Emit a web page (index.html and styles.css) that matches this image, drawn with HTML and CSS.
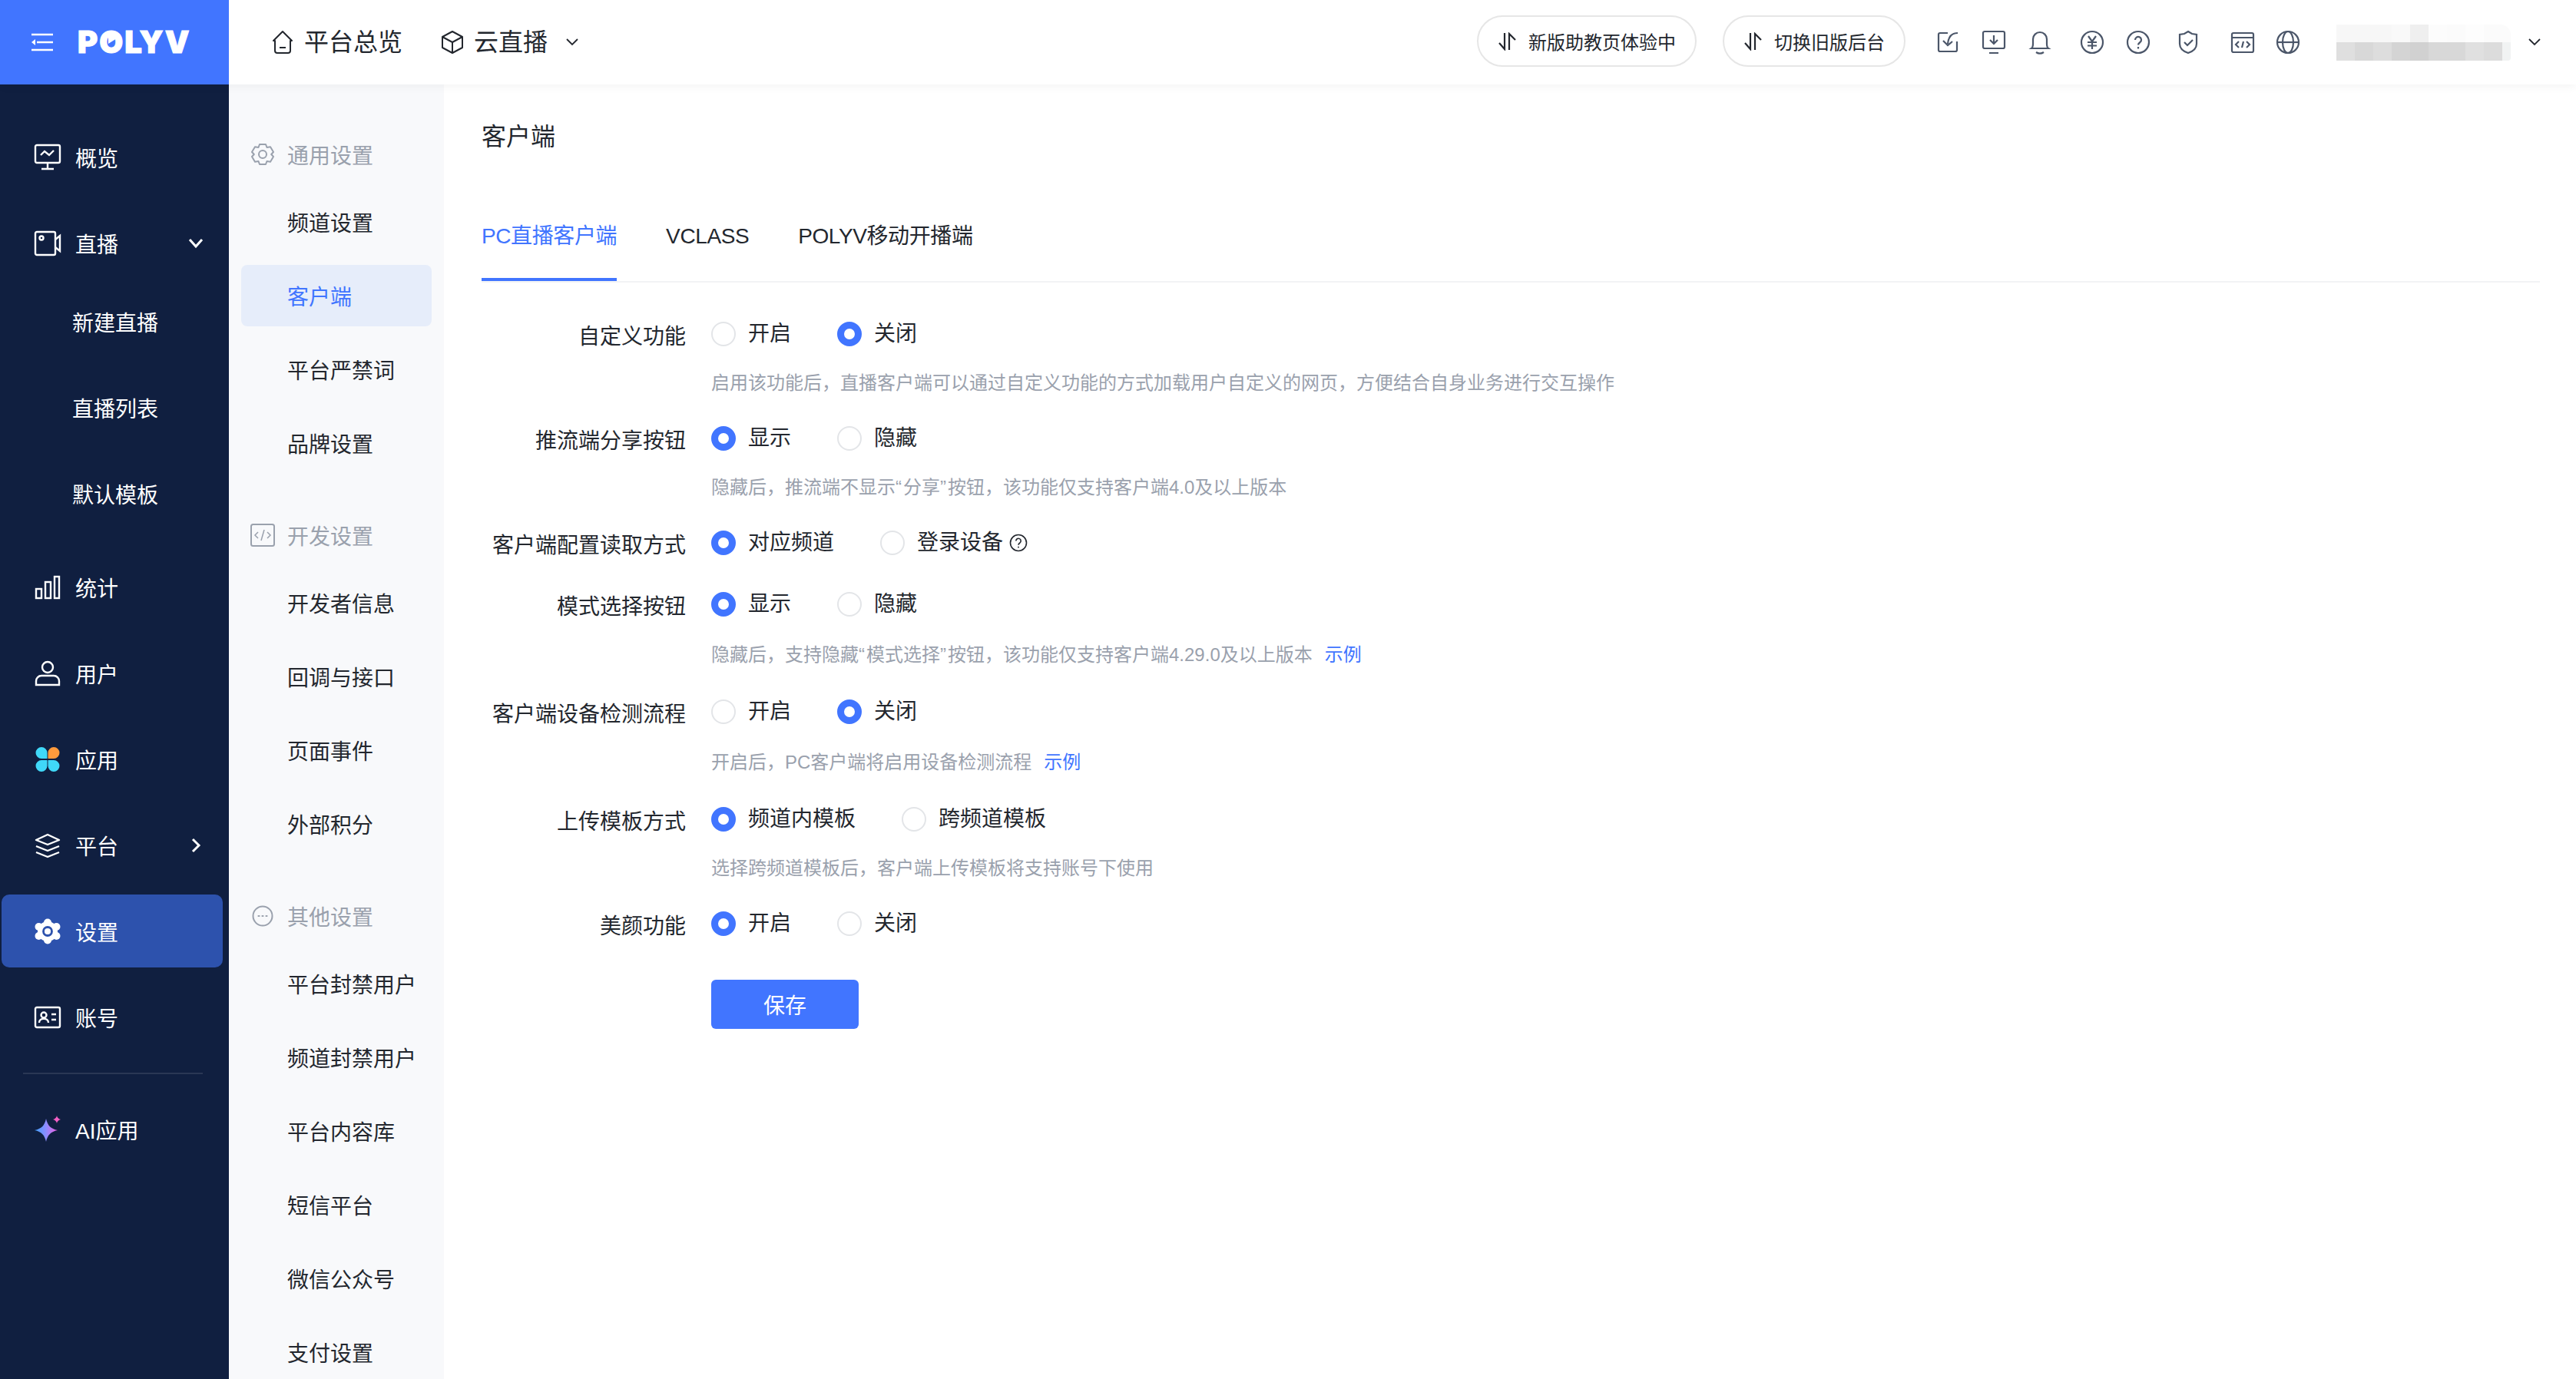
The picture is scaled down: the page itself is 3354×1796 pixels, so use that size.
FILE: index.html
```html
<!DOCTYPE html>
<html lang="zh-CN">
<head>
    <meta charset="UTF-8">
    <title>POLYV - 客户端</title>
    <link rel="stylesheet" href="styles.css">
</head>
<body>
    <!-- Top bar -->
    <header class="topbar">
        <div class="brand">
            <svg class="brand-toggle" viewBox="0 0 28 24" fill="none" stroke="#fff" stroke-width="2.4"><path d="M0 2h28M7 12h21M0 22h28"/><path d="M0 12l5-4v8z" fill="#fff" stroke="none"/></svg>
            <span class="brand-logo">P<span class="brand-o">O<i class="brand-play"></i></span>LYV</span>
        </div>
        <nav class="topnav">
            <a class="topnav-item">
                <svg class="topnav-icon" viewBox="0 0 32 32" fill="none" stroke="#23272e" stroke-width="2" stroke-linejoin="round"><path d="M16 2L4 14h2v13a3 3 0 0 0 3 3h14a3 3 0 0 0 3-3V14h2z"/><path d="M12 23h8"/></svg>
                平台总览
            </a>
            <a class="topnav-item topnav-item--product">
                <svg class="topnav-icon" viewBox="0 0 32 32" fill="none" stroke="#23272e" stroke-width="2" stroke-linejoin="round"><path d="M16 2l13 7v14l-13 7-13-7V9z"/><path d="M3 9l13 7 13-7M16 16v14"/></svg>
                云直播
                <svg class="topnav-chevron" viewBox="0 0 16 10" fill="none" stroke="#23272e" stroke-width="1.8"><path d="M1 1l7 7 7-7"/></svg>
            </a>
        </nav>
        <div class="topbar-right">
            <a class="pill">
                <svg class="pill-icon" viewBox="0 0 24 24" fill="none" stroke="#23272e" stroke-width="2.200"><path d="M9 1v21L2 14M15 23V2l8 8"/></svg>
                新版助教页体验中
            </a>
            <a class="pill">
                <svg class="pill-icon" viewBox="0 0 24 24" fill="none" stroke="#23272e" stroke-width="2.200"><path d="M9 1v21L2 14M15 23V2l8 8"/></svg>
                切换旧版后台
            </a>
            <div class="tools">
                <svg class="tool" viewBox="0 0 32 32"><path d="M16 4H6a2 2 0 0 0-2 2v20a2 2 0 0 0 2 2h20a2 2 0 0 0 2-2V15"/><path d="M29 4c-7 0-12 4-13 14M10 14l6 6 6-5"/></svg>
                <svg class="tool" viewBox="0 0 32 32"><rect x="2" y="2" width="28" height="22" rx="2"/><path d="M16 7v11M11 13l5 5 5-5M10 30h12"/></svg>
                <svg class="tool" viewBox="0 0 32 32"><path d="M5 24c1.500-1 2-3 2-6v-6a9 9 0 0 1 18 0v6c0 3 .5 5 2 6z"/><path d="M11 29c3 2 7 2 10 0"/></svg>
                <svg class="tool tool--gap-md" viewBox="0 0 32 32"><circle cx="16" cy="16" r="14"/><path d="M11 8l5 7 5-7M16 15v10M10 16h12M10 20.500h12"/></svg>
                <svg class="tool" viewBox="0 0 32 32"><circle cx="16" cy="16" r="14"/><path d="M12 13a4 4 0 1 1 6.500 3c-1.500 1-2.500 1.500-2.500 3.500M16 22v2.500"/></svg>
                <svg class="tool tool--gap-sm" viewBox="0 0 32 32"><path d="M16 2l5 3 6 1v12c0 6-5 10-11 12-6-2-11-6-11-12V6l6-1z"/><path d="M11 16l4 4 7-7"/></svg>
                <svg class="tool tool--gap-lg" viewBox="0 0 32 32"><rect x="2" y="4" width="28" height="25" rx="2"/><path d="M2 10h28M11 15l-4 4 4 4M21 15l4 4-4 4M17 15l-2 8"/></svg>
                <svg class="tool tool--tight" viewBox="0 0 32 32"><circle cx="16" cy="16" r="14"/><ellipse cx="16" cy="16" rx="7" ry="14"/><path d="M2 16h28"/></svg>
            </div>
            <div class="avatar"></div>
            <svg class="topnav-chevron" viewBox="0 0 16 10" fill="none" stroke="#23272e" stroke-width="1.8"><path d="M1 1l7 7 7-7"/></svg>
        </div>
    </header>

    <div class="layout">
        <!-- Dark sidebar -->
        <aside class="sidebar">
            <a class="side-item">
                <svg class="side-icon" viewBox="0 0 36 36" fill="none" stroke="#fff" stroke-width="2.400"><rect x="2" y="2" width="32" height="23" rx="2"/><path d="M9 15l5-5 6 5 6-6M18 25v8M10 33h16"/></svg>
                概览
            </a>
            <a class="side-item">
                <svg class="side-icon" viewBox="0 0 36 36" fill="none" stroke="#fff" stroke-width="2.400"><rect x="2" y="3" width="26" height="30" rx="2"/><circle cx="10" cy="11" r="2.500"/><path d="M28 13l6-5v20l-6-5"/></svg>
                直播
                <svg class="side-chevron" viewBox="0 0 20 14" fill="none" stroke="#fff" stroke-width="3"><path d="M2 2l8 9 8-9"/></svg>
            </a>
            <div class="side-sub">
                <a class="side-subitem">新建直播</a>
                <a class="side-subitem">直播列表</a>
                <a class="side-subitem">默认模板</a>
            </div>
            <a class="side-item">
                <svg class="side-icon" viewBox="0 0 36 36" fill="none" stroke="#fff" stroke-width="2.400"><rect x="3" y="20" width="7" height="12"/><rect x="15" y="11" width="7" height="21"/><rect x="27" y="4" width="6" height="28"/></svg>
                统计
            </a>
            <a class="side-item">
                <svg class="side-icon" viewBox="0 0 36 36" fill="none" stroke="#fff" stroke-width="2.400"><circle cx="18" cy="10" r="7"/><path d="M3 33v-5a7 7 0 0 1 7-7h16a7 7 0 0 1 7 7v5z"/></svg>
                用户
            </a>
            <a class="side-item">
                <svg class="side-icon" viewBox="0 0 36 36"><path d="M10 2a7.500 7.500 0 0 1 7.500 7.500v7a.5.5 0 0 1-.5.500h-7a7.500 7.500 0 0 1 0-15z" fill="#40d8f8"/><path d="M26 2a7.500 7.500 0 0 1 0 15h-7a.5.5 0 0 1-.5-.5v-7A7.500 7.500 0 0 1 26 2z" fill="#ff9a3c"/><path d="M10 34a7.500 7.500 0 0 1 0-15h7a.5.5 0 0 1 .5.500v7A7.500 7.500 0 0 1 10 34z" fill="#40d8f8"/><path d="M26 34a7.500 7.500 0 0 1-7.500-7.500v-7a.5.5 0 0 1 .5-.5h7a7.500 7.500 0 0 1 0 15z" fill="#40d8f8"/></svg>
                应用
            </a>
            <a class="side-item">
                <svg class="side-icon" viewBox="0 0 36 36" fill="none" stroke="#fff" stroke-width="2.400" stroke-linejoin="round"><path d="M18 4l15 7-15 6-15-6z"/><path d="M3 19l15 6 15-6M3 27l15 6 15-6"/></svg>
                平台
                <svg class="side-chevron side-chevron--right" viewBox="0 0 14 20" fill="none" stroke="#fff" stroke-width="3"><path d="M3 2l8 8-8 8"/></svg>
            </a>
            <a class="side-item side-item--active">
                <svg class="side-icon" viewBox="0 0 36 36"><g fill="#fff"><circle cx="18" cy="18" r="13"/><circle cx="18" cy="6.500" r="5"/><circle cx="18" cy="29.500" r="5"/><circle cx="6.500" cy="12" r="5"/><circle cx="29.500" cy="12" r="5"/><circle cx="6.500" cy="24" r="5"/><circle cx="29.500" cy="24" r="5"/></g><circle cx="18" cy="18" r="5.500" fill="#fff" stroke="#2d52ad" stroke-width="2.800"/></svg>
                设置
            </a>
            <a class="side-item">
                <svg class="side-icon" viewBox="0 0 36 36" fill="none" stroke="#fff" stroke-width="2.400"><rect x="2" y="5" width="32" height="26" rx="2"/><circle cx="13" cy="15" r="3.500"/><path d="M7 25c0-7 12-7 12 0M23 14h6M23 21h6"/></svg>
                账号
            </a>
            <div class="side-divider"></div>
            <a class="side-item">
                <svg class="side-icon" viewBox="0 0 36 36"><defs><linearGradient id="spark" x1="0" y1="0.500" x2="1" y2="0.500"><stop offset="0" stop-color="#3fa2ff"/><stop offset="0.500" stop-color="#8d8cff"/><stop offset="1" stop-color="#f05fe0"/></linearGradient></defs><path d="M16 4c2 9 6 13 15 15-9 2-13 6-15 15-2-9-6-13-15-15 9-2 13-6 15-15z" fill="url(#spark)"/><path d="M30 0c.5 2.500 2 4 5 5-3 1-4.500 2.500-5 5-.5-2.500-2-4-5-5 3-1 4.500-2.500 5-5z" fill="#f25fc4"/></svg>
                AI应用
            </a>
        </aside>

        <!-- Settings menu -->
        <aside class="submenu">
            <div class="submenu-group">
                <div class="submenu-title">
                    <svg class="submenu-icon" viewBox="0 0 32 32" fill="none" stroke="#9aa1ad" stroke-width="2" stroke-linejoin="round"><path d="M12 3h8l1.500 4 4.500-.8 4 6.800-2.800 3 2.800 3-4 6.800-4.500-.8L20 29h-8l-1.500-4-4.500.8-4-6.800 2.800-3-2.800-3 4-6.800 4.500.8z"/><circle cx="16" cy="16" r="5"/></svg>
                    通用设置
                </div>
                <a class="submenu-item">频道设置</a>
                <a class="submenu-item submenu-item--active">客户端</a>
                <a class="submenu-item">平台严禁词</a>
                <a class="submenu-item">品牌设置</a>
            </div>
            <div class="submenu-group">
                <div class="submenu-title">
                    <svg class="submenu-icon" viewBox="0 0 32 32" fill="none" stroke="#9aa1ad" stroke-width="2"><rect x="1" y="2" width="30" height="28" rx="2.500"/><path d="M10 12l-4 4 4 4M22 12l4 4-4 4M18 9l-4 14" stroke-width="1.500"/></svg>
                    开发设置
                </div>
                <a class="submenu-item">开发者信息</a>
                <a class="submenu-item">回调与接口</a>
                <a class="submenu-item">页面事件</a>
                <a class="submenu-item">外部积分</a>
            </div>
            <div class="submenu-group">
                <div class="submenu-title">
                    <svg class="submenu-icon" viewBox="0 0 32 32" fill="none" stroke="#9aa1ad" stroke-width="2"><circle cx="16" cy="16" r="12.500"/><path d="M10.500 16h1M15.500 16h1M20.500 16h1" stroke-width="2.200" stroke-linecap="round"/></svg>
                    其他设置
                </div>
                <a class="submenu-item">平台封禁用户</a>
                <a class="submenu-item">频道封禁用户</a>
                <a class="submenu-item">平台内容库</a>
                <a class="submenu-item">短信平台</a>
                <a class="submenu-item">微信公众号</a>
                <a class="submenu-item">支付设置</a>
            </div>
        </aside>

        <!-- Page content -->
        <main class="content">
            <h1 class="page-title">客户端</h1>
            <div class="tabs">
                <a class="tab tab--active">PC直播客户端</a>
                <a class="tab">VCLASS</a>
                <a class="tab">POLYV移动开播端</a>
            </div>

            <form class="form">
                <div class="form-row">
                    <label class="form-label">自定义功能</label>
                    <div class="form-control">
                        <div class="radios">
                            <span class="radio"><i class="radio-dot"></i>开启</span>
                            <span class="radio"><i class="radio-dot radio-dot--on"></i>关闭</span>
                        </div>
                        <p class="hint">启用该功能后，直播客户端可以通过自定义功能的方式加载用户自定义的网页，方便结合自身业务进行交互操作</p>
                    </div>
                </div>

                <div class="form-row">
                    <label class="form-label">推流端分享按钮</label>
                    <div class="form-control">
                        <div class="radios">
                            <span class="radio"><i class="radio-dot radio-dot--on"></i>显示</span>
                            <span class="radio"><i class="radio-dot"></i>隐藏</span>
                        </div>
                        <p class="hint">隐藏后，推流端不显示<span class="quote">“</span>分享<span class="quote">”</span>按钮，该功能仅支持客户端4.0及以上版本</p>
                    </div>
                </div>

                <div class="form-row form-row--plain">
                    <label class="form-label">客户端配置读取方式</label>
                    <div class="form-control">
                        <div class="radios">
                            <span class="radio"><i class="radio-dot radio-dot--on"></i>对应频道</span>
                            <span class="radio"><i class="radio-dot"></i>登录设备
                                <svg class="help-icon" viewBox="0 0 24 24" fill="none" stroke="#23272e" stroke-width="1.600"><circle cx="12" cy="12" r="10.500"/><path d="M8.800 9.500a3.200 3.200 0 1 1 5 2.600c-1.100.8-1.800 1.200-1.800 2.700M12 16.800v1.800"/></svg>
                            </span>
                        </div>
                    </div>
                </div>

                <div class="form-row">
                    <label class="form-label">模式选择按钮</label>
                    <div class="form-control">
                        <div class="radios">
                            <span class="radio"><i class="radio-dot radio-dot--on"></i>显示</span>
                            <span class="radio"><i class="radio-dot"></i>隐藏</span>
                        </div>
                        <p class="hint hint--link">隐藏后，支持隐藏<span class="quote">“</span>模式选择<span class="quote">”</span>按钮，该功能仅支持客户端4.29.0及以上版本<a class="hint-example">示例</a></p>
                    </div>
                </div>

                <div class="form-row">
                    <label class="form-label">客户端设备检测流程</label>
                    <div class="form-control">
                        <div class="radios">
                            <span class="radio"><i class="radio-dot"></i>开启</span>
                            <span class="radio"><i class="radio-dot radio-dot--on"></i>关闭</span>
                        </div>
                        <p class="hint hint--link">开启后，PC客户端将启用设备检测流程<a class="hint-example">示例</a></p>
                    </div>
                </div>

                <div class="form-row">
                    <label class="form-label">上传模板方式</label>
                    <div class="form-control">
                        <div class="radios">
                            <span class="radio"><i class="radio-dot radio-dot--on"></i>频道内模板</span>
                            <span class="radio"><i class="radio-dot"></i>跨频道模板</span>
                        </div>
                        <p class="hint">选择跨频道模板后，客户端上传模板将支持账号下使用</p>
                    </div>
                </div>

                <div class="form-row form-row--plain">
                    <label class="form-label">美颜功能</label>
                    <div class="form-control">
                        <div class="radios">
                            <span class="radio"><i class="radio-dot radio-dot--on"></i>开启</span>
                            <span class="radio"><i class="radio-dot"></i>关闭</span>
                        </div>
                    </div>
                </div>

                <button class="save-btn" type="button">保存</button>
            </form>
        </main>
    </div>
</body>
</html>
```
FILE: styles.css
```css
:root {
    --primary-color: #4175ff;
    --navy: #101f40;
    --navy-active: #2d52ad;
    --text-color: #23272e;
    --muted-color: #9aa1ad;
    --icon-color: #4b5669;
}

* {
    margin: 0;
    padding: 0;
    box-sizing: border-box;
    font-family: "Liberation Sans", "Noto Sans CJK SC", sans-serif;
}

body {
    height: 100vh;
    overflow: hidden;
    display: flex;
    flex-direction: column;
    background-color: white;
    color: var(--text-color);
}

/* top bar */
.topbar {
    flex: none;
    height: 110px;
    display: flex;
    align-items: center;
    position: relative;
    z-index: 1;
    background-color: white;
    box-shadow: 0 2px 12px rgba(0,0,0,0.05);
}

.brand {
    width: 298px;
    height: 110px;
    flex: none;
    display: flex;
    align-items: center;
    padding-left: 41px;
    gap: 32px;
    background-color: var(--primary-color);
}

.brand-toggle {
    width: 28px;
    height: 24px;
}

.brand-logo {
    font-family: Inter, sans-serif;
    font-weight: 900;
    font-size: 40px;
    line-height: 40px;
    letter-spacing: 2px;
    color: white;
    -webkit-text-stroke: 1px white;
}

.brand-o {
    font-family: inherit;
    position: relative;
}

.brand-play {
    position: absolute;
    left: 12px;
    top: 13px;
    width: 0;
    height: 0;
    border-left: 11px solid white;
    border-top: 7px solid transparent;
    border-bottom: 7px solid transparent;
}

.topnav {
    display: flex;
    align-items: center;
    padding-left: 54px;
    gap: 49px;
}

.topnav-item {
    display: flex;
    align-items: center;
    gap: 12px;
    font-size: 32px;
    line-height: 44px;
}

.topnav-icon {
    width: 32px;
    height: 32px;
}

.topnav-chevron {
    width: 16px;
    height: 10px;
    flex: none;
}

.topnav-item--product .topnav-chevron {
    margin-left: 12px;
}

.topbar-right {
    margin-left: auto;
    padding-right: 46px;
    display: flex;
    align-items: center;
}

.pill {
    height: 67px;
    display: flex;
    align-items: center;
    gap: 16px;
    padding: 0 25px;
    margin: 0 34px 3px 0;
    border: 2px solid #e6e6e6;
    border-radius: 34px;
    font-size: 24px;
}

.pill-icon {
    width: 24px;
    height: 24px;
}

.pill + .pill {
    margin-right: 39px;
}

.tools {
    display: flex;
    align-items: center;
    gap: 28px;
}

.tool {
    width: 32px;
    height: 32px;
    fill: none;
    stroke: var(--icon-color);
    stroke-width: 2.200;
}

.tool--gap-md {
    margin-left: 8px;
}

.tool--gap-sm {
    margin-left: 5px;
}

.tool--gap-lg {
    margin-left: 11px;
}

.tool--tight {
    margin-left: -1px;
}

/* pixelated account name */
.avatar {
    width: 227px;
    height: 47px;
    margin: 0 23px 0 47px;
    border-top-right-radius: 14px;
    border-bottom-right-radius: 4px;
    background-image:
        linear-gradient(90deg, #f7f7f7 0 72px, #f9f9f9 72px 96px, #efefef 96px 120px, #fcfcfc 120px 144px, #fbfbfb 144px 168px, #fdfdfd 168px 192px, #fbfbfb 192px),
        linear-gradient(90deg, #dfdfdf 0 24px, #d8d8d8 24px 48px, #dddddd 48px 72px, #d4d4d4 72px 96px, #d1d1d1 96px 120px, #d8d8d8 120px 168px, #e0e0e0 168px 192px, #dcdcdc 192px 216px, #f1f3f3 216px);
    background-size: 100% 23px, 100% 24px;
    background-position: 0 0, 0 23px;
    background-repeat: no-repeat;
}

.layout {
    flex: 1;
    display: flex;
    min-height: 0;
}

/* dark sidebar */
.sidebar {
    width: 298px;
    flex: none;
    padding: 47px 0 0 2px;
    background-color: var(--navy);
    color: white;
}

.side-item {
    width: 288px;
    height: 95px;
    margin-bottom: 17px;
    padding-left: 42px;
    display: flex;
    align-items: center;
    gap: 18px;
    border-radius: 10px;
    font-size: 28px;
}

.side-item--active {
    background-color: var(--navy-active);
}

.side-icon {
    width: 36px;
    height: 36px;
    flex: none;
}

.side-chevron {
    width: 20px;
    height: 14px;
    margin-left: auto;
    margin-right: 25px;
}

.side-chevron--right {
    width: 14px;
    height: 20px;
    margin-right: 28px;
}

.side-sub {
    margin-top: -10px;
    margin-bottom: 0;
}

.side-subitem {
    display: flex;
    align-items: center;
    height: 95px;
    margin-bottom: 17px;
    padding-left: 92px;
    font-size: 28px;
}

.side-sub .side-subitem:last-child {
    margin-bottom: 27px;
}

.side-divider {
    width: 234px;
    height: 2px;
    margin: 25px 0 24px 28px;
    background-color: #2a3754;
}

/* settings menu */
.submenu {
    width: 280px;
    flex: none;
    padding: 71px 16px 0;
    overflow: hidden;
    background-color: #f8f9fb;
}

.submenu-group {
    margin-bottom: 60px;
}

.submenu-title {
    display: flex;
    align-items: center;
    gap: 16px;
    height: 40px;
    margin-bottom: 28px;
    padding-left: 12px;
    font-size: 28px;
    color: var(--muted-color);
}

.submenu-icon {
    width: 32px;
    height: 32px;
}

.submenu-item {
    display: flex;
    align-items: center;
    width: 248px;
    height: 80px;
    margin-bottom: 16px;
    padding-left: 60px;
    border-radius: 8px;
    font-size: 28px;
}

.submenu-item--active {
    background-color: #e6edfa;
    color: var(--primary-color);
}

/* content */
.content {
    flex: 1;
    padding: 44px 47px 0 49px;
}

.page-title {
    font-size: 32px;
    font-weight: 400;
    line-height: 48px;
}

.tabs {
    display: flex;
    gap: 64px;
    margin-top: 86px;
    border-bottom: 2px solid #f2f3f5;
}

.tab {
    padding-bottom: 34px;
    border-bottom: 4px solid transparent;
    font-size: 28px;
    line-height: 40px;
    letter-spacing: -0.4px;
}

.tab--active {
    color: var(--primary-color);
    border-bottom-color: var(--primary-color);
}

.form {
    margin-top: 43px;
}

.form-row {
    display: flex;
    margin-bottom: 28px;
}

.form-row--plain {
    margin-bottom: 32px;
}

.form-label {
    width: 266px;
    height: 48px;
    margin-right: 33px;
    padding-top: 4px;
    text-align: right;
    font-size: 28px;
    line-height: 48px;
}

.radios {
    display: flex;
    height: 48px;
    gap: 60px;
}

.radio {
    display: flex;
    align-items: center;
    gap: 16px;
    font-size: 28px;
    line-height: 48px;
}

.radio-dot {
    width: 32px;
    height: 32px;
    border: 2px solid #e3e5e8;
    border-radius: 50%;
    background-color: white;
}

.radio-dot--on {
    border: 9px solid var(--primary-color);
}

.help-icon {
    width: 24px;
    height: 24px;
    margin-left: -8px;
}

.hint {
    margin-top: 20px;
    font-size: 24px;
    line-height: 40px;
    color: var(--muted-color);
}

.hint--link {
    margin-top: 22px;
    margin-bottom: 2px;
}

.quote {
    letter-spacing: 2px;
}

.hint-example {
    margin-left: 16px;
    color: var(--primary-color);
}

.save-btn {
    display: block;
    width: 192px;
    height: 64px;
    margin: 49px 0 0 299px;
    border: none;
    border-radius: 6px;
    background-color: var(--primary-color);
    color: white;
    font-size: 28px;
}
```
